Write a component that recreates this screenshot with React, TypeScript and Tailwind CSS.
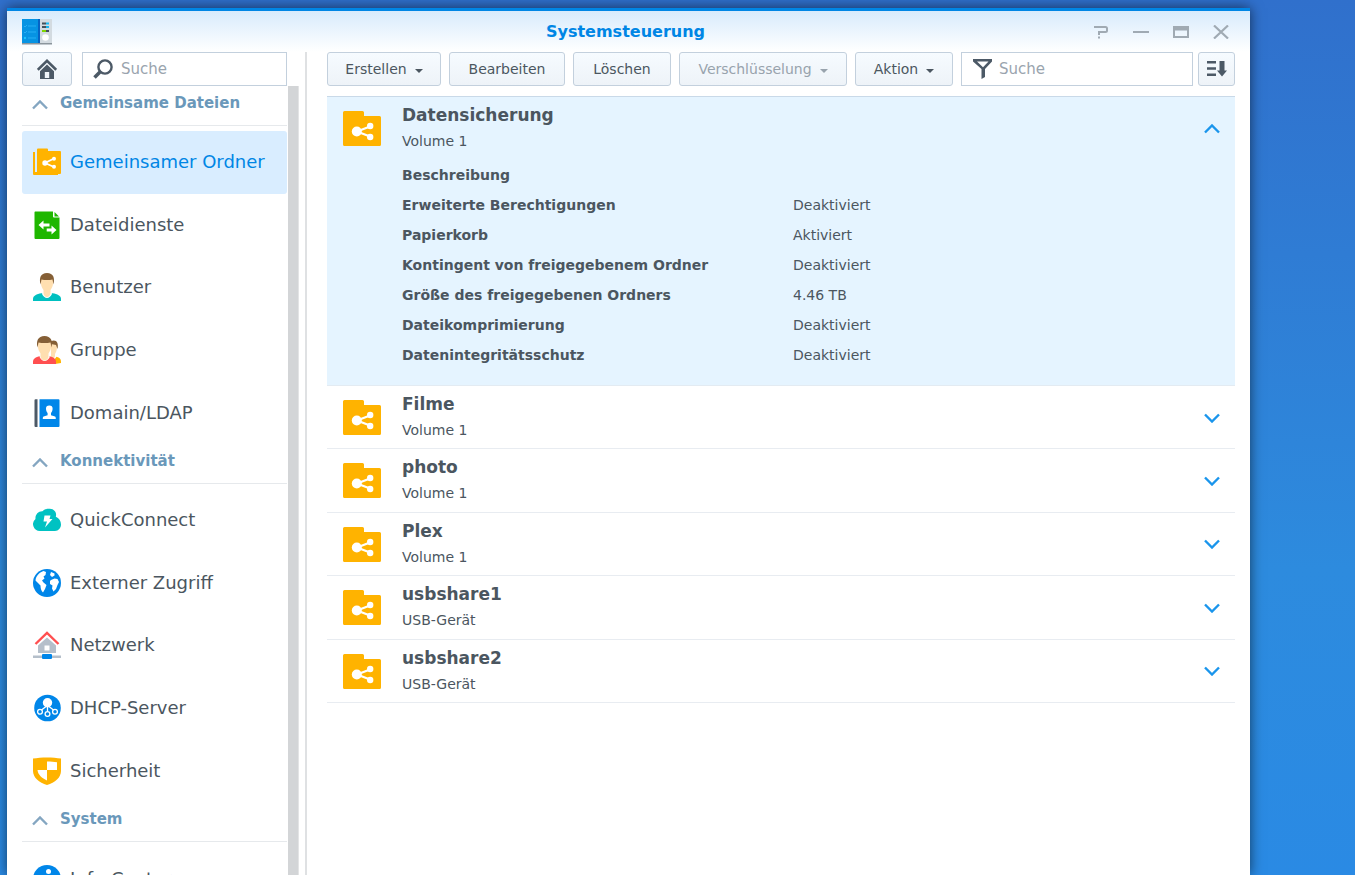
import { useState } from "react";
import type { ReactNode } from "react";
import clsx from "clsx";

function Icon({ children, className }: { children: ReactNode; className?: string }) {
  return (
    <svg viewBox="0 0 28 28" className={clsx("size-7 shrink-0", className)} aria-hidden="true">
      {children}
    </svg>
  );
}

const SharedFolderIcon = (
  <Icon>
    <path d="M0 4h2v20h23v3H1a1 1 0 0 1-1-1z" fill="#ffb300" />
    <path d="M4 1.5a1 1 0 0 1 1-1h9a1 1 0 0 1 1 1V3h12a1 1 0 0 1 1 1v21a1 1 0 0 1-1 1H4z" fill="#ffb300" />
    <g fill="#fff" stroke="#fff">
      <path d="M21 10.5l-9 4.5 9 4" fill="none" strokeWidth="1.8" />
      <circle cx="12" cy="15" r="2.7" stroke="none" />
      <circle cx="21" cy="10.8" r="2" stroke="none" />
      <circle cx="21" cy="18.8" r="2" stroke="none" />
    </g>
  </Icon>
);

const FileServiceIcon = (
  <Icon>
    <path d="M2 .5h18v5a1 1 0 0 0 1 1h5.500V27a1 1 0 0 1-1 1h-23a1 1 0 0 1-1-1V1.500a1 1 0 0 1 .5-1z" fill="#1fb700" />
    <path d="M21.500 1l4.500 4.500h-4.500z" fill="#1fb700" />
    <path d="M5.500 14l5-4.500v3h6v3h-6v3zM23.500 19l-5-4.500v3h-4.800v3h4.800v3z" fill="#fff" />
  </Icon>
);

const UserIcon = (
  <Icon>
    <path d="M0 28v-2c0-3.500 3.500-5 8.500-5.800h11C24.500 21 28 22.500 28 26v2z" fill="#00c0c0" />
    <path d="M9.500 19.500h9l.5 1.500c-1 2-3 4-5 4s-4-2-5-4z" fill="#fff" />
    <path d="M8 7c0-4 2.500-5.500 6-5.500S20 3 20 7v3.500c0 3-1.500 5-2.500 6.500v3c0 2-1.500 4-3.500 4s-3.500-2-3.500-4v-3C9.500 15.500 8 13.500 8 10.500z" fill="#ffdfb0" />
    <path d="M7.500 11.500C6 5 7.500 0 14 0s8 5 6.500 11.500L19.500 6.500c-3 .8-8 .8-11 0z" fill="#855f36" />
  </Icon>
);

const GroupIcon = (
  <Icon>
    <path d="M22 28l-1-4 2.500-3.200c3 .7 4.500 2 4.500 5V27z" fill="#ffb300" />
    <path d="M18 8c3-2 6-1 6 3 0 3-1 5-2 7v2c0 2-2 3-4 3z" fill="#ffdfb0" />
    <path d="M18 5c5-2 8 1 6.500 8L23 9l-5-1z" fill="#855f36" />
    <path d="M0 28v-2c0-3.500 2.500-5 7-5.800h9C20.500 21 23 22.500 23 26v2z" fill="#ff4f50" />
    <path d="M7 19.500h9l.8 1.500c-1 2-3 4-5.200 4s-4-2-5-4z" fill="#fff" />
    <path d="M5 7c0-4 3-5.500 6.500-5.500S18 3 18 7v4c0 3-1.500 4.500-2.500 6.500v3c0 2-2 4-4 4s-4-2-4-4v-3C6.500 15.500 5 14 5 11z" fill="#ffdfb0" />
    <path d="M4.500 11.500C3 5 5 0 11.500 0S20 5 18.500 11.500l-1-5c-3.500 .8-8.500 .8-12 0z" fill="#855f36" />
  </Icon>
);

const DomainIcon = (
  <Icon>
    <path d="M2.500.3h2V28h-2a1 1 0 0 1-1-1V1.300a1 1 0 0 1 1-1z" fill="#4c5966" />
    <path d="M6.500.3h19a1 1 0 0 1 1 1V27a1 1 0 0 1-1 1h-19z" fill="#0086e9" />
    <path d="M13 9.500c0-2 1-3 3.300-3s3.300 1 3.300 3c0 2-.8 3.500-1.600 4.500v2.200l4 1.300c.6.300.8.800.8 2.500H9.800c0-1.700.2-2.200.8-2.500l4-1.300V14c-.8-1-1.600-2.500-1.600-4.500z" fill="#fff" />
  </Icon>
);

const QuickConnectIcon = (
  <Icon>
    <path d="M7 25a6.800 6.800 0 0 1-4.500-12C2 9 5 5 9.500 5.200 11.500 3 14 2.500 17 2.700c4.500.3 7 4 5.800 8C26 12 28 15 28 18.500 28 22 25.500 25 22 25z" fill="#00c2c2" />
    <path d="M11.500 9.500h6L16.500 13h3L12 21.500l2-6h-3.500z" fill="#fff" />
  </Icon>
);

const GlobeIcon = (
  <Icon>
    <circle cx="14" cy="14" r="14" fill="#0086e9" />
    <path d="M10.500 2l2.500 1-.5 3-2 1.500 1 2-2.500 2 1.500 2 3 2.500-1.500 4-2 3.500c-2-1.500-2.500-5-2.500-7L5 14l-2.500-2.500C3 7 6 3.500 10.500 2zM18 3l3.500 1.500v2L19 8l-2-2zM18 11l3.500-1.500 3 .5 1.500 3-1.500 3-1.500 4-2.500 2.500-1.500-3 .5-3-2.500-1.500V12z" fill="#fff" />
  </Icon>
);

const NetworkIcon = (
  <Icon>
    <path d="M14 6.500l9 8V22H5v-7.500z" fill="#b5bfca" />
    <path d="M11.500 14.500h5v5h-5z" fill="#fff" />
    <path d="M2.500 13L14 2l11.500 11" fill="none" stroke="#ff4f50" strokeWidth="2.400" />
    <path d="M0 24.500h28V27H0z" fill="#b5bfca" />
    <rect x="9" y="23" width="10" height="5" rx="1" fill="#0086e9" />
  </Icon>
);

const DhcpIcon = (
  <Icon>
    <circle cx="14.500" cy="14" r="13.300" fill="#0086e9" />
    <circle cx="14.500" cy="8.700" r="4.700" fill="#fff" />
    <g fill="none" stroke="#fff" strokeWidth="1.300">
      <path d="M14.500 12v5M13 12.500l-4.500 3.500M16 12.500l4.500 3.500" />
      <circle cx="7" cy="17.800" r="2.400" />
      <circle cx="14.500" cy="20" r="2.400" />
      <circle cx="22" cy="17.800" r="2.400" />
    </g>
  </Icon>
);

const ShieldIcon = (
  <Icon>
    <path d="M0 1.500C8 0 20 0 28 1.500V14c0 6.500-6 11.500-14 14C6 25.500 0 20.500 0 14z" fill="#ffb300" />
    <path d="M14 4.500c4 0 7 .2 10 .8V13H14zM14 13v10.500C9 21 5 18 4.500 13z" fill="#fff" />
  </Icon>
);

const InfoIcon = (
  <Icon>
    <circle cx="14" cy="14" r="14" fill="#0086e9" />
    <circle cx="15.500" cy="6.500" r="2.500" fill="#fff" />
    <path d="M11 11.500h5.500L14.500 21h2.500l-.5 2h-5L13.300 14H11z" fill="#fff" />
  </Icon>
);

const sections = [
  {
    title: "Gemeinsame Dateien",
    items: [
      { label: "Gemeinsamer Ordner", icon: SharedFolderIcon },
      { label: "Dateidienste", icon: FileServiceIcon },
      { label: "Benutzer", icon: UserIcon },
      { label: "Gruppe", icon: GroupIcon },
      { label: "Domain/LDAP", icon: DomainIcon },
    ],
  },
  {
    title: "Konnektivität",
    items: [
      { label: "QuickConnect", icon: QuickConnectIcon },
      { label: "Externer Zugriff", icon: GlobeIcon },
      { label: "Netzwerk", icon: NetworkIcon },
      { label: "DHCP-Server", icon: DhcpIcon },
      { label: "Sicherheit", icon: ShieldIcon },
    ],
  },
  {
    title: "System",
    items: [{ label: "Info-Center", icon: InfoIcon }],
  },
];

const details = [
  ["Beschreibung", ""],
  ["Erweiterte Berechtigungen", "Deaktiviert"],
  ["Papierkorb", "Aktiviert"],
  ["Kontingent von freigegebenem Ordner", "Deaktiviert"],
  ["Größe des freigegebenen Ordners", "4.46 TB"],
  ["Dateikomprimierung", "Deaktiviert"],
  ["Datenintegritätsschutz", "Deaktiviert"],
];

const folders = [
  { name: "Filme", location: "Volume 1" },
  { name: "photo", location: "Volume 1" },
  { name: "Plex", location: "Volume 1" },
  { name: "usbshare1", location: "USB-Gerät" },
  { name: "usbshare2", location: "USB-Gerät" },
];

function Chevron({ up, className }: { up?: boolean; className?: string }) {
  return (
    <svg viewBox="0 0 16 10" className={clsx("h-[10px] w-4 shrink-0", className)} fill="none" stroke="currentColor" aria-hidden="true">
      <path d={up ? "M1 8.500l7-7 7 7" : "M1 1.500l7 7 7-7"} strokeWidth="2.400" />
    </svg>
  );
}

function FolderHeader({ name, location, open }: { name: string; location: string; open?: boolean }) {
  return (
    <div className="flex h-[63px] items-start pr-[15px] pl-4">
      <svg viewBox="0 0 38 36" className="mt-[14px] h-9 w-[38px] shrink-0" aria-hidden="true">
        <path d="M0 1.500A1.500 1.500 0 0 1 1.500 0h18A1.500 1.500 0 0 1 21 1.500V5h15.500A1.500 1.500 0 0 1 38 6.500v27a1.500 1.500 0 0 1-1.500 1.500h-35A1.500 1.500 0 0 1 0 33.500z" fill="#ffb300" />
        <path d="M27 15.500l-13 5 13 5" fill="none" stroke="#fff" strokeWidth="2.200" />
        <circle cx="13.800" cy="20.500" r="5" fill="#fff" />
        <circle cx="27.200" cy="15" r="3.200" fill="#fff" />
        <circle cx="27.200" cy="26" r="3.200" fill="#fff" />
      </svg>
      <div className="flex-1 pt-1 pl-[21px]">
        <h2 className="text-[17px] leading-7 font-bold">{name}</h2>
        <p className="text-sm leading-6">{location}</p>
      </div>
      <button type="button" aria-label={name} className="flex h-full items-center text-[#1a95ec]">
        <Chevron up={open} />
      </button>
    </div>
  );
}

const buttonStyle =
  "flex h-[34px] shrink-0 items-center justify-center rounded-[3px] border border-[#c3d0dd] bg-linear-to-b from-[#f6fbff] to-[#eef3f8] text-sm";

function ToolButton({ children, menu, disabled, className }: { children: ReactNode; menu?: boolean; disabled?: boolean; className: string }) {
  return (
    <button type="button" disabled={disabled} className={clsx(buttonStyle, disabled && "text-[#98a3ad]", className)}>
      {children}
      {menu && (
        <svg viewBox="0 0 8 4" className="mt-1 ml-2 h-1 w-2" aria-hidden="true">
          <path d="M0 0h8L4 4z" fill="currentColor" />
        </svg>
      )}
    </button>
  );
}

function TitleBar() {
  return (
    <header className="grid h-[41px] shrink-0 grid-cols-[1fr_auto_1fr] items-center bg-linear-to-b from-[#d8ebfc] to-white pr-[21px] pl-[15px]">
      <svg viewBox="0 0 30 26" className="h-[26px] w-[30px]" aria-hidden="true">
        <path d="M0 24h30v1.500H0z" fill="#8b959c" />
        <path d="M18 0h12v24H18z" fill="#d3dbe1" />
        <path d="M0 0h18v24H0z" fill="#0693e3" />
        <path d="M16 0h2v24h-2z" fill="#0563c5" />
        <path d="M2 7l1 1 2-2M2 13l1 1 2-2M6 7h8M6 13h8M6 19h8" fill="none" stroke="#27aef4" />
        <circle cx="3" cy="19" r="1.200" fill="#1cc3ff" />
        <path d="M20 3.500h4v2h-4zM20 7h4v2h-4zM24 11h3v2h-3z" fill="#46515b" />
        <path d="M24 3.500h3v2h-3zM24 7h3v2h-3z" fill="#16b7f0" />
        <path d="M20 11h4v2h-4z" fill="#7fd600" />
        <circle cx="23.500" cy="18.500" r="3.300" fill="#fff" />
      </svg>
      <h1 className="text-[16px] leading-6 font-bold text-[#0086e5]">Systemsteuerung</h1>
      <div className="flex items-center justify-end gap-6 text-[#a0aab3]">
        <button type="button" aria-label="Hilfe">
          <svg viewBox="0 0 16 14" className="h-[14px] w-4" fill="none" stroke="currentColor" strokeWidth="2">
            <path d="M1 2h11.500q1.500 0 1.500 1.500v2q0 1.500-1.500 1.500H6v3M6 11.500v2" />
          </svg>
        </button>
        <button type="button" aria-label="Minimieren">
          <svg viewBox="0 0 16 14" className="h-[14px] w-4">
            <path d="M0 6h16v2H0z" fill="currentColor" />
          </svg>
        </button>
        <button type="button" aria-label="Maximieren">
          <svg viewBox="0 0 16 14" className="h-[14px] w-4">
            <path d="M0 1h16v12H0zM2 5.500v5.500h12V5.500z" fill="currentColor" fillRule="evenodd" />
          </svg>
        </button>
        <button type="button" aria-label="Schließen">
          <svg viewBox="0 0 16 14" className="h-[14px] w-4" fill="none" stroke="currentColor" strokeWidth="2.200">
            <path d="M1 .5l14 13M15 .5l-14 13" />
          </svg>
        </button>
      </div>
    </header>
  );
}

function Sidebar() {
  const [active, setActive] = useState("Gemeinsamer Ordner");

  return (
    <aside className="flex w-[300px] shrink-0 flex-col border-r-2 border-[#dfe1e3] pl-[15px]">
      <div className="flex gap-[10px] pr-[18px]">
        <button type="button" aria-label="Startseite" className={clsx(buttonStyle, "w-[50px]")}>
          <svg viewBox="0 0 20 20" className="size-5" aria-hidden="true">
            <path d="M.8 10.800L10 1.800l9.200 9" fill="none" stroke="#4c5966" strokeWidth="2.600" />
            <path d="M10 5.500l7 6.800V20H3v-7.700zM7.800 13v6h4.400v-6z" fill="#4c5966" fillRule="evenodd" />
          </svg>
        </button>
        <label className="flex h-[34px] min-w-0 flex-1 items-center border border-[#c3d0dd] bg-white pl-[10px]">
          <svg viewBox="0 0 20 20" className="size-5 shrink-0" fill="none" stroke="#4c5966" aria-hidden="true">
            <circle cx="12" cy="8" r="6.600" strokeWidth="2.400" />
            <path d="M7 13l-5.500 5.500" strokeWidth="3.600" />
          </svg>
          <input type="text" placeholder="Suche" aria-label="Suche" className="w-full min-w-0 pl-2 text-[15px] outline-none placeholder:text-[#9aa4ae]" />
        </label>
      </div>
      <div className="flex min-h-0 flex-1">
        <nav className="min-w-0 flex-1 overflow-hidden pr-px">
          {sections.map((section) => (
            <section key={section.title}>
              <h2 className="flex h-10 items-center border-b border-[#e6e9ec] pb-[5px] pl-[10px] text-[15px] font-bold text-[#6a98ba]">
                <Chevron up className="mt-1 mr-3 text-[#84a6c1]" />
                {section.title}
              </h2>
              <ul className={clsx("mt-[5px] grid", section.items.length > 1 ? "h-[313px] auto-rows-fr" : "auto-rows-[63px]")}>
                {section.items.map((item) => (
                  <li key={item.label}>
                    <a
                      href="#"
                      onClick={() => setActive(item.label)}
                      className={clsx(
                        "flex h-full items-center gap-[9px] rounded-[3px] pl-[11px] text-lg leading-6",
                        item.label === active && "bg-[#d9edff] text-[#0086e5]",
                      )}
                    >
                      {item.icon}
                      {item.label}
                    </a>
                  </li>
                ))}
              </ul>
            </section>
          ))}
        </nav>
        <div className="mr-[6px] w-[11px] shrink-0 border-r border-[#e3e4e5] bg-[#d3d5d7]" />
      </div>
    </aside>
  );
}

function Toolbar() {
  return (
    <div className="flex gap-2">
      <ToolButton menu className="w-[114px]">Erstellen</ToolButton>
      <ToolButton className="w-[116px]">Bearbeiten</ToolButton>
      <ToolButton className="w-[98px]">Löschen</ToolButton>
      <ToolButton menu disabled className="w-[168px]">Verschlüsselung</ToolButton>
      <ToolButton menu className="w-[98px]">Aktion</ToolButton>
      <div className="flex flex-1 gap-[5px]">
        <label className="flex h-[34px] min-w-0 flex-1 items-center border border-[#c3d0dd] bg-white pl-[11px]">
          <svg viewBox="0 0 20 20" className="size-5 shrink-0" aria-hidden="true">
            <path d="M0 0h19v2.500l-7 7.500v8l-3.500 2V10L0 2.500zM4 2.500L10 8.300l5.500-5.800z" fill="#4c5966" fillRule="evenodd" />
          </svg>
          <input type="text" placeholder="Suche" aria-label="Ordner filtern" className="w-full min-w-0 pl-[6px] text-[15px] outline-none placeholder:text-[#9aa4ae]" />
        </label>
        <button type="button" aria-label="Sortieren" className={clsx(buttonStyle, "w-[37px]")}>
          <svg viewBox="0 0 20 16" className="h-4 w-5" fill="#4c5966" aria-hidden="true">
            <path d="M0 0h9v2.500H0zM0 6.300h9v2.500H0zM0 12.600h9v2.500H0zM12.500 0h5v9.500H20L15 15.500 10 9.500h2.500z" />
          </svg>
        </button>
      </div>
    </div>
  );
}

export default function App() {
  return (
    <div className="flex h-screen overflow-hidden bg-linear-to-b from-[#3070cc] via-[#2d8bde] via-65% to-[#2a8ae4] pt-2 pr-[105px] pl-[7px] font-['DejaVu_Sans',Verdana,sans-serif] text-[#4b5660]">
      <div className="flex min-w-0 flex-1 flex-col border-t-[3px] border-[#0086e5] bg-white shadow-[0_0_12px_rgba(0,0,0,0.6)]">
        <TitleBar />
        <div className="flex min-h-0 flex-1">
          <Sidebar />
          <main className="min-w-0 flex-1 pr-[15px] pl-5">
            <Toolbar />
            <article className="mt-[10px] border-t border-b border-t-[#c9d9e8] border-b-[#e3ebf2] bg-[#e5f4ff] pb-[15px]">
              <FolderHeader name="Datensicherung" location="Volume 1" open />
              <dl className="pl-[75px] text-sm leading-[30px]">
                {details.map(([label, value]) => (
                  <div key={label} className="flex h-[30px]">
                    <dt className="w-[391px] font-bold">{label}</dt>
                    <dd>{value}</dd>
                  </div>
                ))}
              </dl>
            </article>
            <ul className="grid h-[317px] auto-rows-fr">
              {folders.map((folder) => (
                <li key={folder.name} className="border-b border-[#e8ecf1]">
                  <FolderHeader {...folder} />
                </li>
              ))}
            </ul>
          </main>
        </div>
      </div>
    </div>
  );
}
